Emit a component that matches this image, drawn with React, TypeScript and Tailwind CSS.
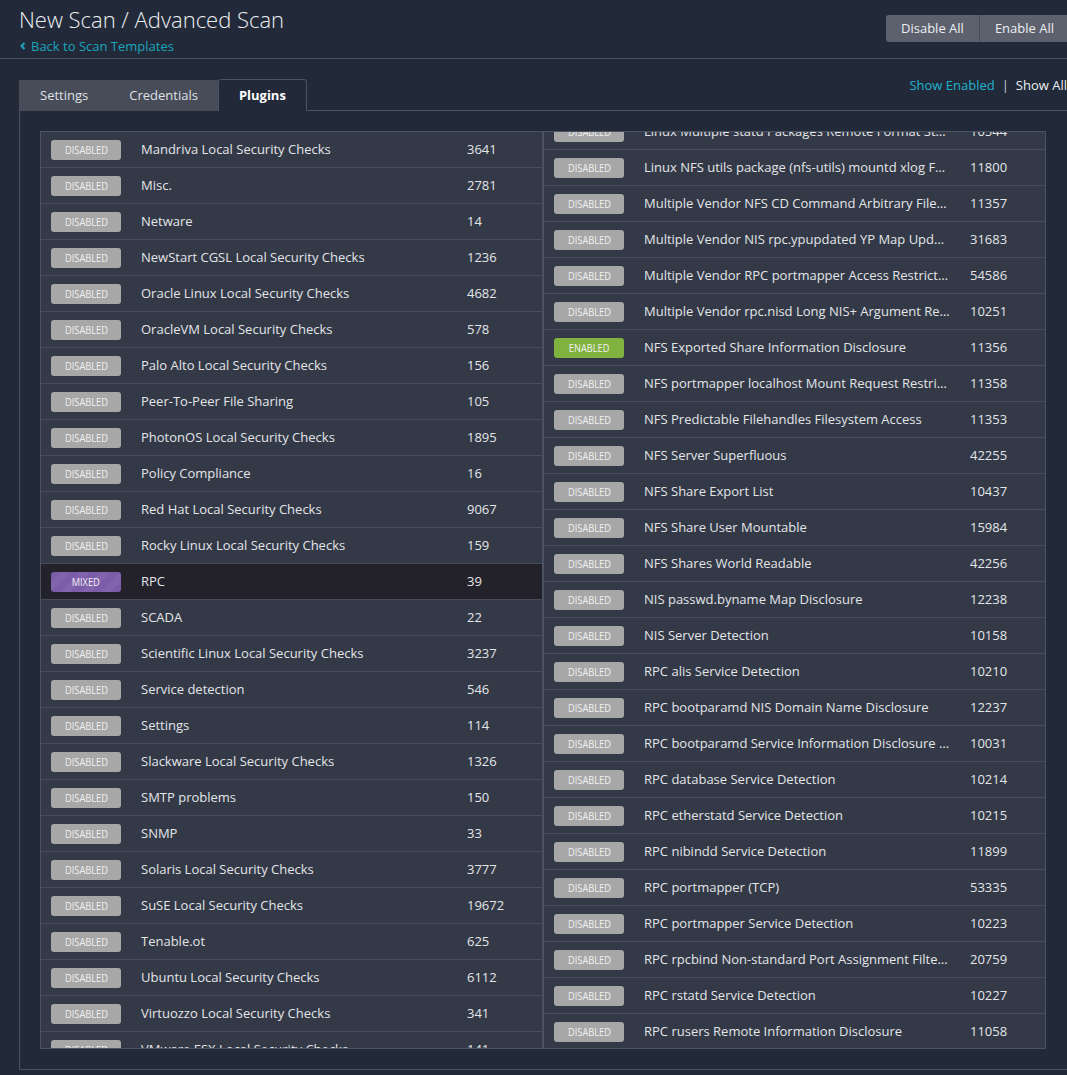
import React from 'react';

type Status = 'disabled' | 'enabled' | 'mixed';

interface Family {
  name: string;
  count: number;
  status?: Status;
  selected?: boolean;
}

const leftRows: Family[] = [
  { name: 'Mandriva Local Security Checks', count: 3641 },
  { name: 'Misc.', count: 2781 },
  { name: 'Netware', count: 14 },
  { name: 'NewStart CGSL Local Security Checks', count: 1236 },
  { name: 'Oracle Linux Local Security Checks', count: 4682 },
  { name: 'OracleVM Local Security Checks', count: 578 },
  { name: 'Palo Alto Local Security Checks', count: 156 },
  { name: 'Peer-To-Peer File Sharing', count: 105 },
  { name: 'PhotonOS Local Security Checks', count: 1895 },
  { name: 'Policy Compliance', count: 16 },
  { name: 'Red Hat Local Security Checks', count: 9067 },
  { name: 'Rocky Linux Local Security Checks', count: 159 },
  { name: 'RPC', count: 39, status: 'mixed', selected: true },
  { name: 'SCADA', count: 22 },
  { name: 'Scientific Linux Local Security Checks', count: 3237 },
  { name: 'Service detection', count: 546 },
  { name: 'Settings', count: 114 },
  { name: 'Slackware Local Security Checks', count: 1326 },
  { name: 'SMTP problems', count: 150 },
  { name: 'SNMP', count: 33 },
  { name: 'Solaris Local Security Checks', count: 3777 },
  { name: 'SuSE Local Security Checks', count: 19672 },
  { name: 'Tenable.ot', count: 625 },
  { name: 'Ubuntu Local Security Checks', count: 6112 },
  { name: 'Virtuozzo Local Security Checks', count: 341 },
  { name: 'VMware ESX Local Security Checks', count: 141 },
];

const rightRows: Family[] = [
  { name: 'Linux Multiple statd Packages Remote Format String Vulnerability', count: 10544 },
  { name: 'Linux NFS utils package (nfs-utils) mountd xlog Function Off-by-one', count: 11800 },
  { name: 'Multiple Vendor NFS CD Command Arbitrary File/Directory Access', count: 11357 },
  { name: 'Multiple Vendor NIS rpc.ypupdated YP Map Update Arbitrary Command', count: 31683 },
  { name: 'Multiple Vendor RPC portmapper Access Restriction Bypass', count: 54586 },
  { name: 'Multiple Vendor rpc.nisd Long NIS+ Argument Remote Overflow', count: 10251 },
  { name: 'NFS Exported Share Information Disclosure', count: 11356, status: 'enabled' },
  { name: 'NFS portmapper localhost Mount Request Restriction Bypass', count: 11358 },
  { name: 'NFS Predictable Filehandles Filesystem Access', count: 11353 },
  { name: 'NFS Server Superfluous', count: 42255 },
  { name: 'NFS Share Export List', count: 10437 },
  { name: 'NFS Share User Mountable', count: 15984 },
  { name: 'NFS Shares World Readable', count: 42256 },
  { name: 'NIS passwd.byname Map Disclosure', count: 12238 },
  { name: 'NIS Server Detection', count: 10158 },
  { name: 'RPC alis Service Detection', count: 10210 },
  { name: 'RPC bootparamd NIS Domain Name Disclosure', count: 12237 },
  { name: 'RPC bootparamd Service Information Disclosure (bootparam)', count: 10031 },
  { name: 'RPC database Service Detection', count: 10214 },
  { name: 'RPC etherstatd Service Detection', count: 10215 },
  { name: 'RPC nibindd Service Detection', count: 11899 },
  { name: 'RPC portmapper (TCP)', count: 53335 },
  { name: 'RPC portmapper Service Detection', count: 10223 },
  { name: 'RPC rpcbind Non-standard Port Assignment Filter Bypass', count: 20759 },
  { name: 'RPC rstatd Service Detection', count: 10227 },
  { name: 'RPC rusers Remote Information Disclosure', count: 11058 },
];

const badgeClass: Record<Status, string> = {
  disabled: 'bg-[#a7a7a7]',
  enabled: 'bg-[#80b23f]',
  mixed:
    'bg-[repeating-linear-gradient(135deg,#7a5ca8_0px,#7a5ca8_7px,#8264ae_7px,#8264ae_14px)]',
};

const StatusBadge: React.FC<{ status: Status }> = ({ status }) => (
  <div
    className={`w-[70px] h-[20px] shrink-0 rounded-[3px] flex items-center justify-center ${badgeClass[status]}`}
  >
    <span className="inline-block text-[11px] leading-none uppercase text-[#f1f1f1] scale-x-[0.84]">
      {status}
    </span>
  </div>
);

const FamilyRow: React.FC<{ row: Family }> = ({ row }) => (
  <div
    className={`flex items-center h-[36px] border-b border-[#464d5b] pl-[10px] ${
      row.selected ? 'bg-[#23212a]' : 'bg-[#333947]'
    }`}
  >
    <StatusBadge status={row.status ?? 'disabled'} />
    <span className="block ml-[20px] w-[306px] truncate text-[13px] text-[#e4e5e7]">{row.name}</span>
    <span className="block ml-[20px] text-[13px] text-[#e4e5e7]">{row.count}</span>
  </div>
);

const FamilyColumn: React.FC<{ rows: Family[]; offset?: string }> = ({ rows, offset = '' }) => (
  <div className="w-[503px] h-[918px] overflow-hidden border border-[#4b5261] bg-[#333947]">
    <div className={offset}>
      {rows.map((row) => (
        <FamilyRow key={row.name} row={row} />
      ))}
    </div>
  </div>
);

export default function App() {
  return (
    <div
      className="w-full min-h-screen overflow-hidden bg-[#222a39] text-[#e4e5e7]"
      style={{ fontFamily: '"Open Sans", "Noto Sans", sans-serif' }}
    >
      <div className="w-[1088px]">
        {/* header */}
        <div className="h-[59px] border-b border-[#485060] px-[19px] flex justify-between">
          <div>
            <h1 className="text-[22px] font-light leading-[30px] pt-[4px] text-[#eceef1]">
              New Scan / Advanced Scan
            </h1>
            <a className="flex items-center gap-[5px] text-[13px] leading-[16px] mt-[4px] text-[#1ba5bd]">
              <svg width="6" height="8" viewBox="0 0 6 8" className="ml-[1px]">
                <path d="M4.5 1 L1.5 4 L4.5 7" stroke="#1ba5bd" strokeWidth="2" fill="none" />
              </svg>
              Back to Scan Templates
            </a>
          </div>
          <div className="flex mt-[15px] h-[27px]">
            <button className="px-[15px] bg-[#5d616d] rounded-l-[3px] text-[13px] text-[#eceef1] border-r border-[#4a4e59]">
              Disable All
            </button>
            <button className="px-[15px] bg-[#5d616d] rounded-r-[3px] text-[13px] text-[#eceef1]">
              Enable All
            </button>
          </div>
        </div>

        {/* tabs */}
        <div className="mt-[17px] pl-[19px] flex items-end">
          <div className="flex h-[31px] bg-[#484c58]">
            <div className="px-[21px] flex items-center text-[13px] text-[#dfe1e4]">Settings</div>
            <div className="px-[20px] flex items-center text-[13px] text-[#dfe1e4]">Credentials</div>
          </div>
          <div className="h-[32px] px-[20px] flex items-center border-t border-x border-[#4b5261] rounded-t-[3px] text-[13px] font-bold text-white">
            Plugins
          </div>
          <div className="flex-1 h-[35px] border-b border-[#4b5261] flex justify-end items-start pr-[21px]">
            <span className="text-[13px] leading-[18px]">
              <span className="text-[#1fb2cd]">Show Enabled</span>
              <span className="mx-[7px] text-[#c9ccd1]">|</span>
              <span className="text-[#eceef1]">Show All</span>
            </span>
          </div>
        </div>

        {/* panel */}
        <div className="ml-[19px] border-l border-b border-[#4b5261] pl-[20px] pt-[20px] pb-[20px] flex">
          <FamilyColumn rows={leftRows} />
          <FamilyColumn rows={rightRows} offset="-mt-[18px]" />
        </div>
      </div>
    </div>
  );
}
